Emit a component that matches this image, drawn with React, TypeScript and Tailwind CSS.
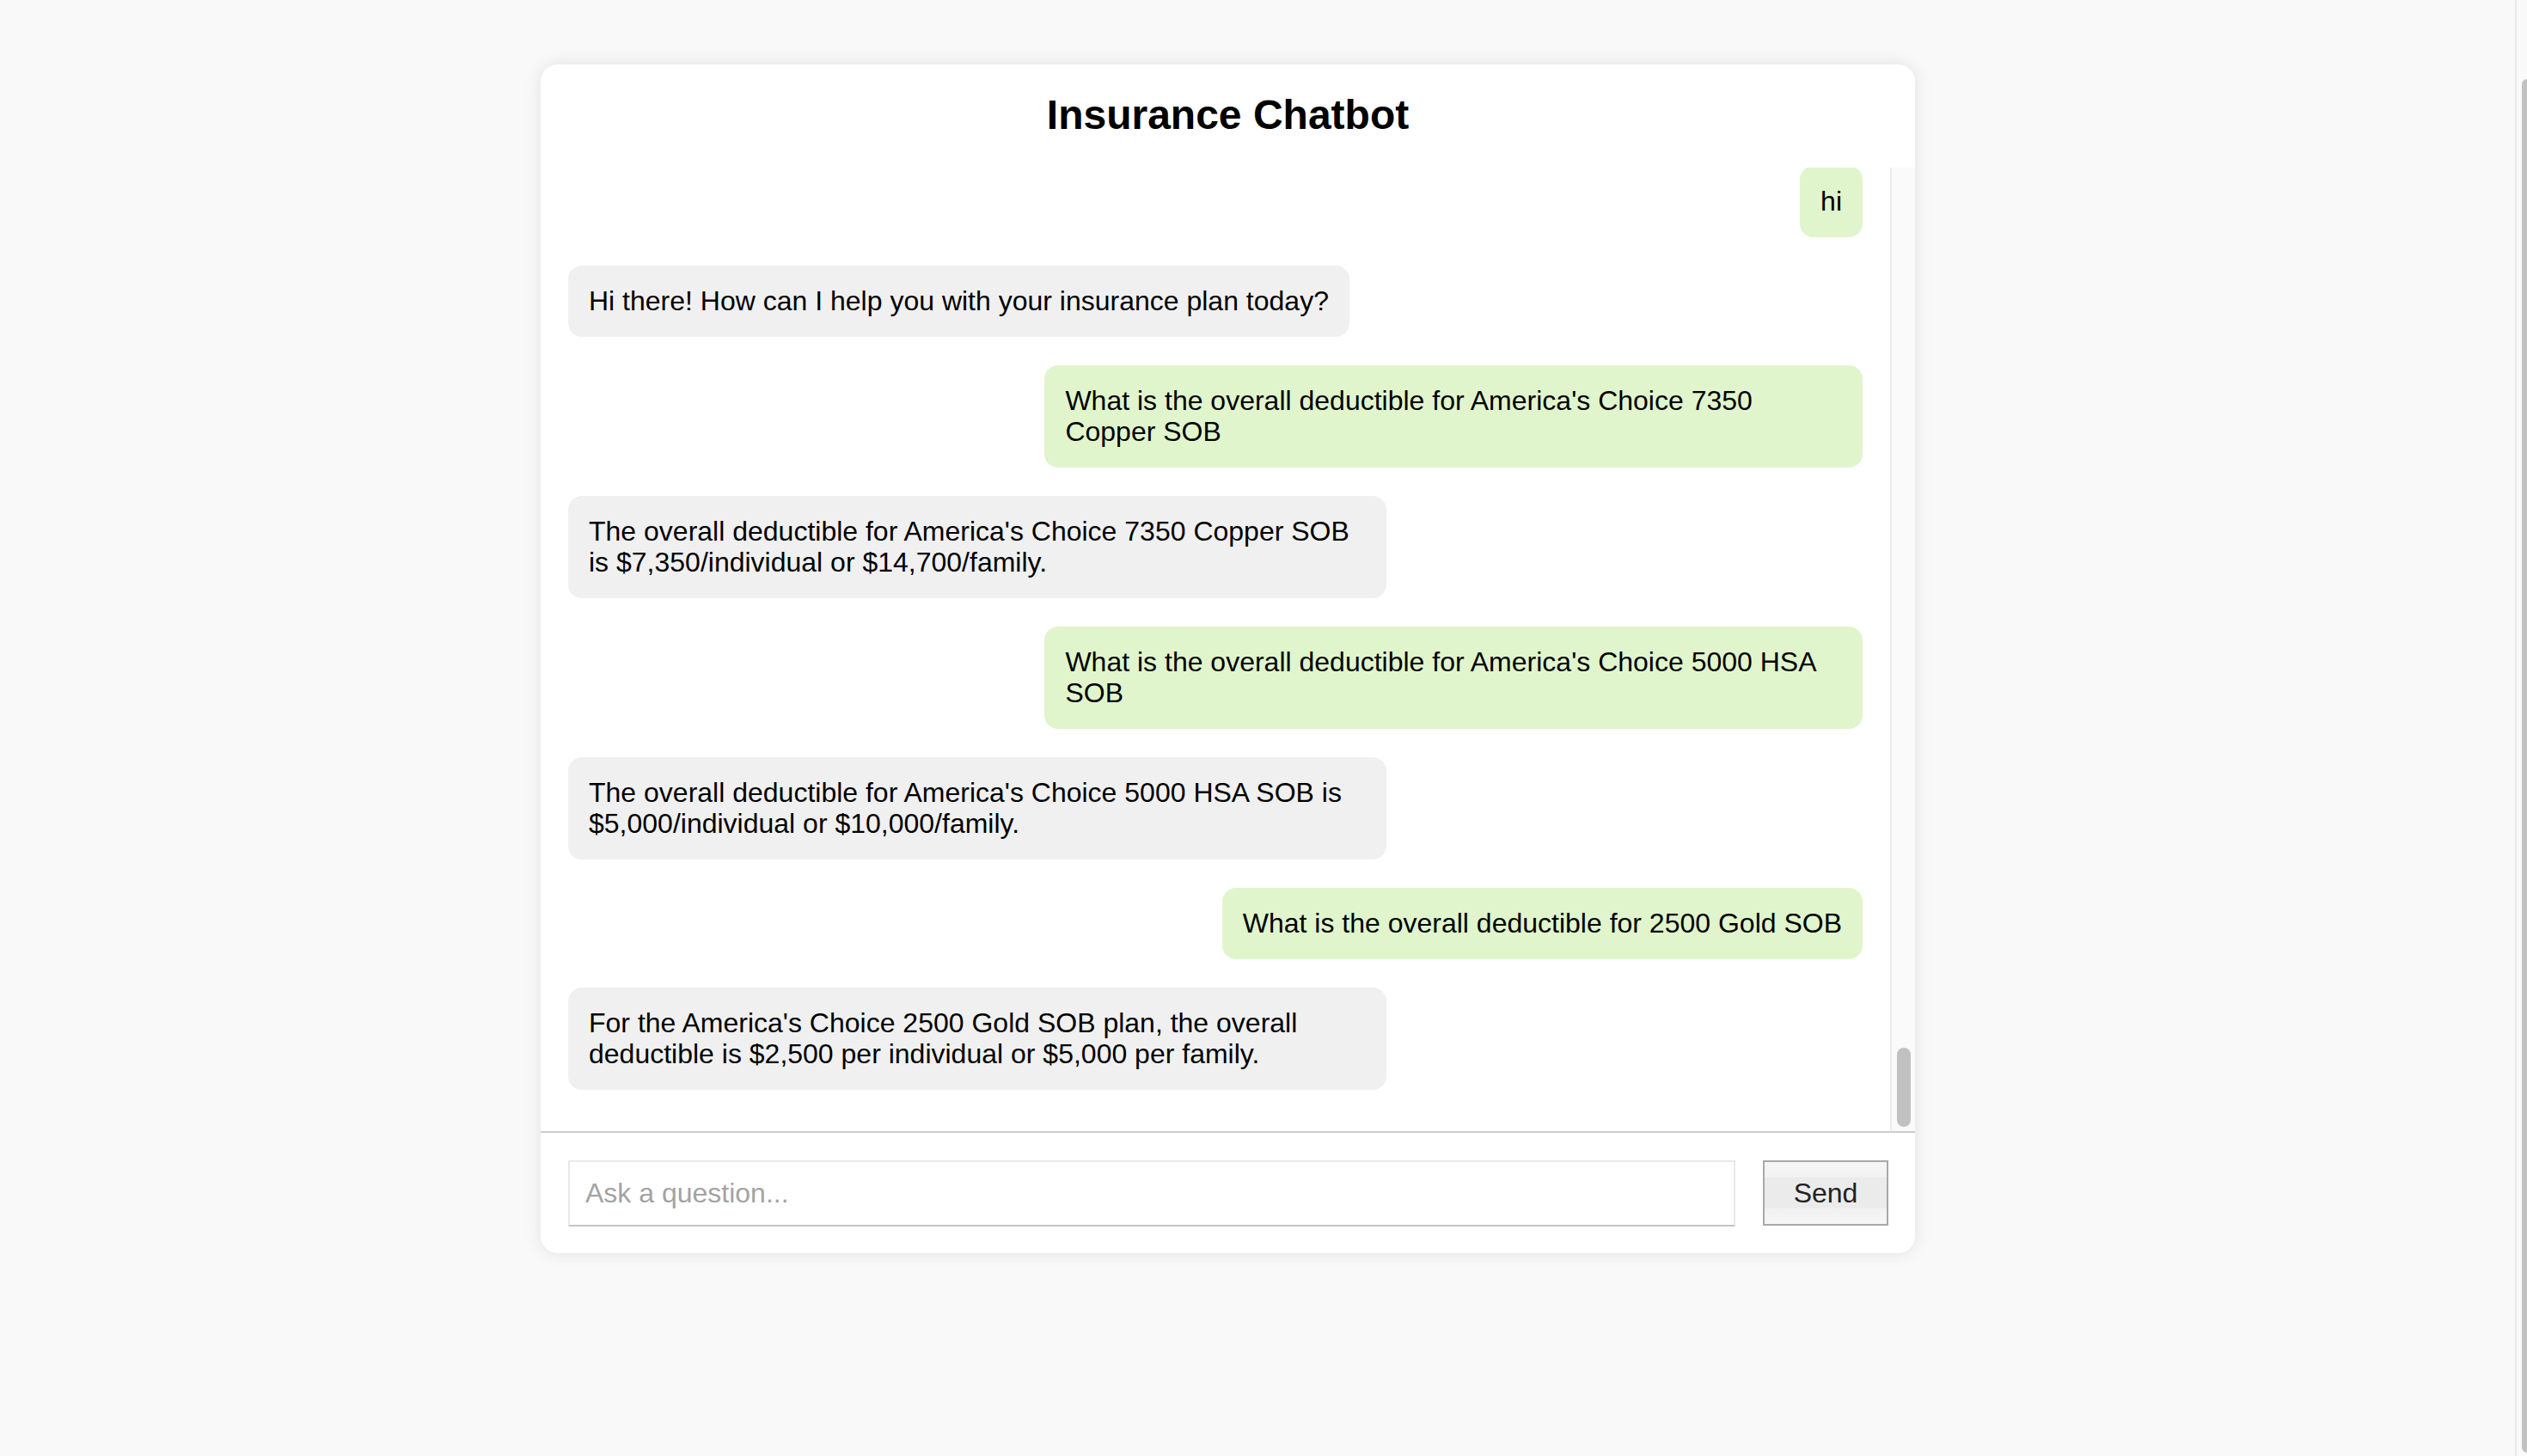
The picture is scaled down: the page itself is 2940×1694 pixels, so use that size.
import React from "react";

type Msg = { from: "user" | "bot"; text: string };

const messages: Msg[] = [
  { from: "user", text: "hi" },
  { from: "bot", text: "Hi there! How can I help you with your insurance plan today?" },
  { from: "user", text: "What is the overall deductible for America's Choice 7350 Copper SOB" },
  {
    from: "bot",
    text: "The overall deductible for America's Choice 7350 Copper SOB is $7,350/individual or $14,700/family.",
  },
  { from: "user", text: "What is the overall deductible for America's Choice 5000 HSA SOB" },
  {
    from: "bot",
    text: "The overall deductible for America's Choice 5000 HSA SOB is $5,000/individual or $10,000/family.",
  },
  { from: "user", text: "What is the overall deductible for 2500 Gold SOB" },
  {
    from: "bot",
    text: "For the America's Choice 2500 Gold SOB plan, the overall deductible is $2,500 per individual or $5,000 per family.",
  },
];

function Bubble({ m }: { m: Msg }) {
  const isUser = m.from === "user";
  return (
    <div className={isUser ? "flex justify-end" : "flex justify-start"}>
      <div
        className={
          "max-w-[951.6px] rounded-[16px] px-[24px] pt-[23px] pb-[24px] text-[32px] leading-[36px] text-black " +
          (isUser ? "bg-[#e0f5cc]" : "bg-[#f0f0f0]")
        }
      >
        {m.text}
      </div>
    </div>
  );
}

export default function App() {
  return (
    <div className="flex h-[1694px] overflow-hidden bg-[#f9f9f9] font-['Liberation_Sans',Arial,sans-serif]">
      <div className="flex-1 pt-[75px]">
        <div className="ml-[629px] flex w-[1599px] flex-col overflow-hidden rounded-[20px] bg-white shadow-[0_0_20px_rgba(0,0,0,0.1)]">
          <h1 className="pt-[31px] pb-[33px] text-center text-[48px] font-bold leading-[56px] text-black">
            Insurance Chatbot
          </h1>
          <div className="flex h-[1121px]">
            <div className="flex flex-1 flex-col justify-end gap-[33px] overflow-hidden px-[32px] pb-[48px]">
              {messages.map((m, i) => (
                <Bubble key={i} m={m} />
              ))}
            </div>
            <div className="flex w-[29px] flex-col justify-end border-l-2 border-[#ebebeb] bg-[#fafafa] pb-[5px] pl-[6px]">
              <div className="h-[92px] w-[16px] rounded-full bg-[#c1c1c1]" />
            </div>
          </div>
          <div className="flex h-[142px] items-center gap-[32px] border-t-2 border-[#cccccc] pl-[32px] pr-[31px]">
            <input
              className="h-[77px] flex-1 border-2 border-[#e8e8e8] border-b-[#c4c4c4] bg-white px-[18px] text-[32px] text-black outline-none placeholder:text-[#a3a3a3]"
              placeholder="Ask a question..."
            />
            <button className="h-[76px] w-[146px] border-2 border-[#a8a8a8] bg-[linear-gradient(#f6f6f6_0%,#f2f2f2_24%,#ebebeb_25%,#ebebeb_74%,#f1f1f1_75%,#f6f6f6_100%)] text-[32px] text-[#222222]">
              Send
            </button>
          </div>
        </div>
      </div>
      <div className="w-[14px] border-l-2 border-[#e8e8e8] bg-[#f9f9f9] pt-[92px] pl-[6px]">
        <div className="h-[1598px] w-[6px] rounded-l-full bg-[#c1c1c1]" />
      </div>
    </div>
  );
}
